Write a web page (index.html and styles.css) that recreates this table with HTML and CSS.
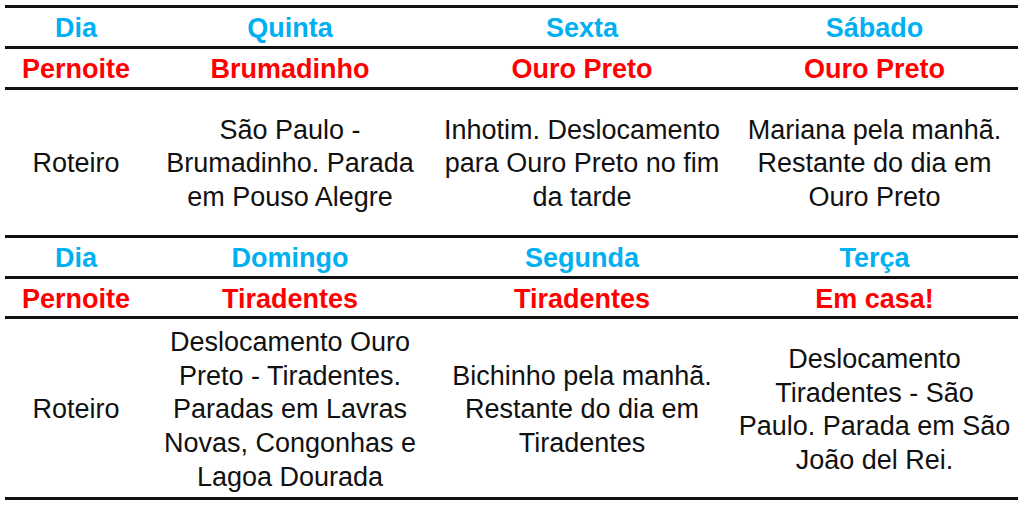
FILE: index.html
```html
<!DOCTYPE html>
<html lang="pt">
<head>
<meta charset="utf-8">
<title>Roteiro</title>
<link rel="stylesheet" href="styles.css">
</head>
<body>
<table class="plan">
  <colgroup>
    <col class="c1"><col class="c2"><col class="c3"><col class="c4">
  </colgroup>
  <tbody>
    <tr class="row-day">
      <td class="day">Dia</td><td class="day">Quinta</td><td class="day">Sexta</td><td class="day">Sábado</td>
    </tr>
    <tr class="row-night">
      <td class="night">Pernoite</td><td class="night">Brumadinho</td><td class="night">Ouro Preto</td><td class="night">Ouro Preto</td>
    </tr>
    <tr class="row-plan1">
      <td>Roteiro</td>
      <td>São Paulo -<br>Brumadinho. Parada<br>em Pouso Alegre</td>
      <td>Inhotim. Deslocamento<br>para Ouro Preto no fim<br>da tarde</td>
      <td>Mariana pela manhã.<br>Restante do dia em<br>Ouro Preto</td>
    </tr>
  </tbody>
</table>
<table class="plan second">
  <colgroup>
    <col class="c1"><col class="c2"><col class="c3"><col class="c4">
  </colgroup>
  <tbody>
    <tr class="row-day">
      <td class="day">Dia</td><td class="day">Domingo</td><td class="day">Segunda</td><td class="day">Terça</td>
    </tr>
    <tr class="row-night">
      <td class="night">Pernoite</td><td class="night">Tiradentes</td><td class="night">Tiradentes</td><td class="night">Em casa!</td>
    </tr>
    <tr class="row-plan2">
      <td>Roteiro</td>
      <td>Deslocamento Ouro<br>Preto - Tiradentes.<br>Paradas em Lavras<br>Novas, Congonhas e<br>Lagoa Dourada</td>
      <td>Bichinho pela manhã.<br>Restante do dia em<br>Tiradentes</td>
      <td>Deslocamento<br>Tiradentes - São<br>Paulo. Parada em São<br>João del Rei.</td>
    </tr>
  </tbody>
</table>
</body>
</html>
```
FILE: styles.css
```css
html, body {
  margin: 0;
  padding: 0;
  background: #ffffff;
}

body {
  padding: 5px 0 0 5px;
  font-family: "Liberation Sans", Arial, sans-serif;
  color: #111111;
}

.plan {
  width: 1013px;
  border-collapse: separate;
  border-spacing: 0;
  table-layout: fixed;
  font-size: 27px;
  line-height: 33.6px;
}

.c1 { width: 142px; }
.c2 { width: 286px; }
.c3 { width: 298px; }
.c4 { width: 287px; }

.plan td {
  padding: 4px 0 0 0;
  text-align: center;
  vertical-align: middle;
  white-space: nowrap;
  border-bottom: 3px solid #111111;
}

.plan .row-day td {
  border-top: 3px solid #111111;
  height: 34px;
}

.second .row-day td {
  border-top: none;
}

.plan .row-night td {
  height: 33px;
}

.plan .row-plan1 td {
  height: 141px;
}

.plan .row-plan2 td {
  height: 174px;
}

.day {
  font-weight: bold;
  color: #00b0f0;
}

.night {
  font-weight: bold;
  color: #ff0000;
}
```
